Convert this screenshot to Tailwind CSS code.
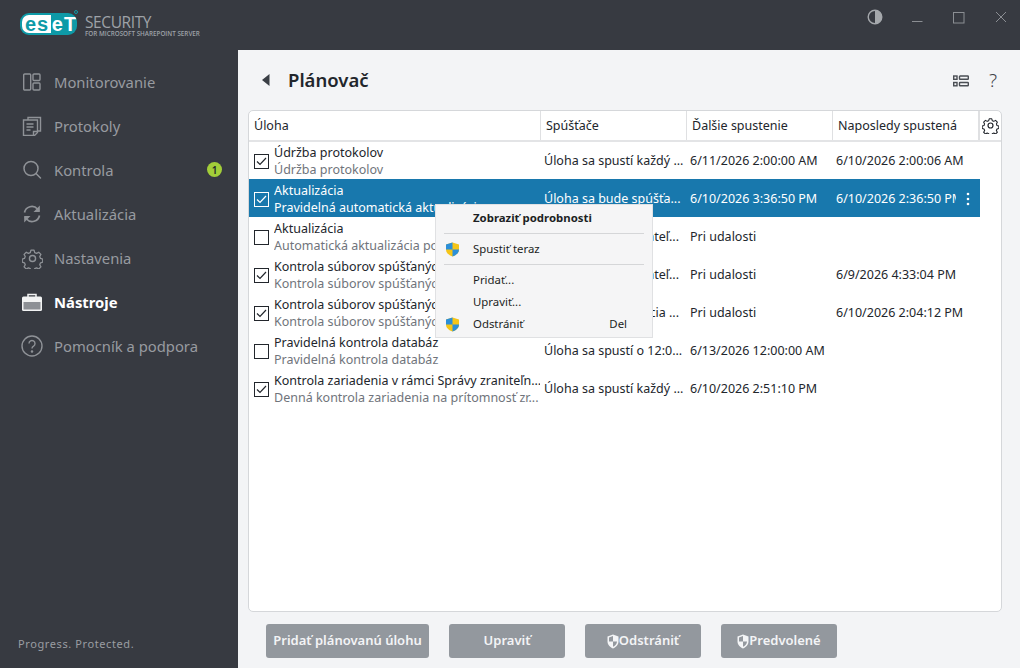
<!doctype html>
<html><head><meta charset="utf-8"><script src="https://cdn.jsdelivr.net/npm/@tailwindcss/browser@4"></script></head>
<body class="m-0">
<div class="relative w-[1020px] h-[668px] overflow-hidden flex flex-col bg-[#f3f4f6] font-['Noto_Sans',sans-serif] text-[12.5px] text-[#22262c]">
  <!-- top bar -->
  <header class="h-[50px] shrink-0 bg-[#373a41] flex items-center relative">
    <div class="ml-[20px] mt-[-2px] relative w-[58px] h-[24px]">
      <div class="absolute left-0 top-[1px] w-[57px] h-[22px] rounded-[9px] bg-[#0e9aa7] overflow-hidden">
        <div class="absolute left-[2px] top-[2px] w-[29px] h-[18px] bg-white rounded-l-[7px]"></div>
        <div class="absolute left-[5px] top-[-2px] flex font-['Liberation_Sans',sans-serif] font-bold text-[20px] leading-[26px]"><span class="text-[#0e9aa7] tracking-[0.8px]">es</span><span class="text-white ml-[3px] tracking-[1px]">eT</span></div>
      </div>
      <span class="absolute left-[54px] top-[-2px] w-[4px] h-[4px] rounded-full border border-[#0e9aa7]"></span>
    </div>
    <div class="ml-[7px] mt-[3px] text-[#9ea2a8] leading-none">
      <div class="text-[15.5px] tracking-[-0.4px] leading-[13px] font-['Open_Sans',sans-serif]">SECURITY</div>
      <div class="text-[6.3px] mt-[2px] font-semibold tracking-[0px] whitespace-nowrap font-['Open_Sans',sans-serif]">FOR MICROSOFT SHAREPOINT SERVER</div>
    </div>
    <svg class="absolute left-[867px] top-[9px]" width="16" height="16" viewBox="0 0 16 16"><circle cx="8" cy="8" r="6.800" fill="none" stroke="#a5a8ac" stroke-width="1.400"/><path d="M8 1.200a6.800 6.800 0 0 1 0 13.600z" fill="#a5a8ac"/></svg>
    <svg class="absolute left-[912px] top-[11px]" width="12" height="12" viewBox="0 0 12 12"><path d="M0 10.500h10.500" stroke="#8b8e93"/></svg>
    <svg class="absolute left-[953px] top-[12px]" width="12" height="12" viewBox="0 0 12 12"><rect x=".5" y=".5" width="10.500" height="10.500" fill="none" stroke="#8b8e93"/></svg>
    <svg class="absolute left-[995px] top-[11px]" width="12" height="12" viewBox="0 0 12 12"><path d="M1 1l10 10M11 1L1 11" stroke="#8b8e93"/></svg>
  </header>
  <div class="flex flex-1 min-h-0">
    <!-- sidebar -->
    <aside class="w-[238px] shrink-0 bg-[#373a41] flex flex-col text-[14.8px] text-[#989ba0] relative">
      <nav class="flex flex-col">
        <a class="h-[44px] flex items-center mt-[10px] pl-[22px]">
          <svg width="20" height="20" viewBox="0 0 20 20" fill="none" stroke="#8f9297" stroke-width="1.400"><rect x="1.700" y="2" width="7" height="16" rx="1"/><rect x="11" y="2" width="7" height="6.500" rx="1"/><rect x="11" y="11" width="7" height="7" rx="1"/></svg>
          <span class="ml-[12px]">Monitorovanie</span>
        </a>
        <a class="h-[44px] flex items-center pl-[22px]">
          <svg width="20" height="20" viewBox="0 0 20 20" fill="none" stroke="#8f9297" stroke-width="1.400"><path d="M6 4V1.500h12.500v13.500H15.500"/><path d="M1.500 4h14v12.500l-3 3h-11z"/><path d="M4.500 8h7M4.500 11h7M4.500 14h4"/><path d="M11.500 19v-3.500h3.500"/></svg>
          <span class="ml-[12px]">Protokoly</span>
        </a>
        <a class="h-[44px] flex items-center pl-[22px] relative">
          <svg width="20" height="20" viewBox="0 0 20 20" fill="none" stroke="#8f9297" stroke-width="1.500"><circle cx="9" cy="8.500" r="7"/><path d="M14 13.500l4.500 4.500" stroke-linecap="round"/></svg>
          <span class="ml-[12px]">Kontrola</span>
          <span class="absolute left-[207px] top-[14px] w-[15px] h-[15px] rounded-full bg-[#a3ce39] text-[#22262c] text-[10px] font-semibold flex items-center justify-center leading-none">1</span>
        </a>
        <a class="h-[44px] flex items-center pl-[22px]">
          <svg width="20" height="20" viewBox="0 0 20 20" fill="none" stroke="#8f9297" stroke-width="1.700"><path d="M2.500 8.500A7.500 7.500 0 0 1 15.500 5l1.500 2"/><path d="M17.800 1.500v6.500H11.500" stroke="none" fill="#8f9297"/><path d="M17.500 11.500A7.500 7.500 0 0 1 4.500 15L3 13"/><path d="M2.200 18.500V12h6.300" stroke="none" fill="#8f9297"/></svg>
          <span class="ml-[12px]">Aktualizácia</span>
        </a>
        <a class="h-[44px] flex items-center pl-[22px]">
          <svg width="21" height="21" viewBox="0 0 24 24" fill="none" stroke="#8f9297" stroke-width="1.600" stroke-linejoin="round"><circle cx="12" cy="12" r="3.500"/><path d="M10 1.500h4l.8 3 2.400 1 2.700-1.500 2.800 2.800-1.500 2.700 1 2.400 2.800.8v4l-2.800.8-1 2.400 1.500 2.700-2.800 2.800-2.700-1.500-2.400 1-.8 2.800h-4l-.8-2.800-2.400-1-2.700 1.500-2.800-2.800 1.500-2.700-1-2.400-2.800-.8v-4l2.800-.8 1-2.400-1.500-2.700 2.800-2.800 2.700 1.500 2.400-1z" transform="translate(1.200 1.200) scale(.9)"/></svg>
          <span class="ml-[11px]">Nastavenia</span>
        </a>
        <a class="h-[44px] flex items-center pl-[22px] text-white font-bold">
          <svg width="20" height="20" viewBox="0 0 20 20"><path d="M6 5V2.500h8V5" fill="none" stroke="#f2f3f3" stroke-width="1.500"/><rect x="0" y="4.500" width="20" height="14.500" rx="1.500" fill="#f2f3f3"/><rect x="1.500" y="10" width="17" height="7.500" fill="#8d9095"/><rect x="1.500" y="9" width="17" height="1" fill="#f2f3f3"/></svg>
          <span class="ml-[12px]">Nástroje</span>
        </a>
        <a class="h-[44px] flex items-center pl-[21px]">
          <svg width="22" height="22" viewBox="0 0 22 22" fill="none" stroke="#8f9297" stroke-width="1.400"><circle cx="11" cy="11" r="10"/><path d="M8 8.500a3 3 0 1 1 4.600 2.600c-1 .6-1.600 1.200-1.600 2.400"/><circle cx="11" cy="16.500" r=".6" fill="#8f9297"/></svg>
          <span class="ml-[11px]">Pomocník a podpora</span>
        </a>
      </nav>
      <div class="mt-auto mb-[16px] ml-[18px] text-[11px] tracking-[0.6px] text-[#9a9da2]">Progress. Protected.</div>
    </aside>
    <!-- main -->
    <main class="flex-1 min-w-0 flex flex-col pl-[10px] pr-[18px]">
      <div class="h-[60px] shrink-0 flex items-center relative">
        <svg class="ml-[13px]" width="10" height="14" viewBox="0 0 10 14"><path d="M8.500 1v12L1 7z" fill="#3a3e45"/></svg>
        <h1 class="ml-[17px] text-[18.500px] font-semibold text-[#22262c] leading-none">Plánovač</h1>
        <svg class="absolute left-[705px] top-[25px]" width="16" height="12" viewBox="0 0 16 12" fill="none" stroke="#4a4e54" stroke-width="1.400"><rect x=".7" y="1" width="3.300" height="3.300"/><rect x=".7" y="7.500" width="3.300" height="3.300"/><rect x="6.500" y="1" width="8.800" height="3.300" rx=".6"/><rect x="6.500" y="7.500" width="8.800" height="3.300" rx=".6"/></svg>
        <span class="absolute left-[741px] top-[18px] text-[#3f4349] text-[19px] leading-[24px] font-light">?</span>
      </div>
      <section class="h-[502px] bg-white border border-[#d5d7da] rounded-[5px] flex flex-col overflow-hidden relative">
        <div class="h-[31px] shrink-0 grid grid-cols-[291px_146px_146px_146px_1fr] items-stretch border-b-2 border-[#e3e4e6] text-[#22262c]">
          <div class="pl-[5px] pt-[2px] flex items-center">Úloha</div>
          <div class="pl-[5px] pt-[2px] flex items-center border-l border-[#dfe0e2]">Spúšťače</div>
          <div class="pl-[5px] pt-[2px] flex items-center border-l border-[#dfe0e2]">Ďalšie spustenie</div>
          <div class="pl-[5px] pt-[2px] flex items-center border-l border-[#dfe0e2]">Naposledy spustená</div>
          <div class="border-l border-[#dfe0e2] flex items-center justify-end pr-[1px]"><div class="border-l border-[#dfe0e2] h-full pl-[2px] flex items-center pr-[1px]">
            <svg width="17" height="17" viewBox="0 0 24 24" fill="none" stroke="#22262c" stroke-width="1.700" stroke-linejoin="round"><circle cx="12" cy="12" r="3.500"/><path d="M10 1.500h4l.8 3 2.400 1 2.700-1.500 2.800 2.800-1.500 2.700 1 2.400 2.800.8v4l-2.800.8-1 2.400 1.500 2.700-2.800 2.800-2.700-1.500-2.400 1-.8 2.800h-4l-.8-2.800-2.400-1-2.700 1.500-2.800-2.800 1.500-2.700-1-2.400-2.800-.8v-4l2.800-.8 1-2.400-1.500-2.700 2.800-2.800 2.700 1.500 2.400-1z" transform="translate(1.200 1.200) scale(.9)"/></svg>
          </div></div>
        </div>
        <div class="flex flex-col w-[731px] mt-[-1px]">
          <div class="h-[38px] pt-[2px] grid grid-cols-[291px_146px_146px_148px] items-center">
            <div class="flex items-center pl-[5px]"><span class="w-[15px] h-[15px] border border-[#22262c] flex items-center justify-center"><svg width="11" height="9" viewBox="0 0 11 9" fill="none" stroke="#22262c" stroke-width="1.200"><path d="M1 4.500l3 3 6-6.500"/></svg></span><div class="ml-[5px] leading-[18px] whitespace-nowrap overflow-hidden w-[266px]"><div class="mt-[1px] mb-[-1px]">Údržba protokolov</div><div class="text-[#70747b]">Údržba protokolov</div></div></div>
            <div class="pl-[4px] whitespace-nowrap">Úloha sa spustí každý ...</div><div class="pl-[4px] whitespace-nowrap">6/11/2026 2:00:00 AM</div><div class="pl-[4px] whitespace-nowrap">6/10/2026 2:00:06 AM</div>
          </div>
          <div class="h-[38px] pt-[2px] grid grid-cols-[291px_146px_146px_148px] items-center bg-[#1878ad] text-white">
            <div class="flex items-center pl-[5px]"><span class="w-[15px] h-[15px] border border-white flex items-center justify-center"><svg width="11" height="9" viewBox="0 0 11 9" fill="none" stroke="#fff" stroke-width="1.200"><path d="M1 4.500l3 3 6-6.500"/></svg></span><div class="ml-[5px] leading-[18px] whitespace-nowrap overflow-hidden w-[266px]"><div class="mt-[1px] mb-[-1px]">Aktualizácia</div><div>Pravidelná automatická aktualizácia</div></div></div>
            <div class="pl-[4px] whitespace-nowrap">Úloha sa bude spúšťa...</div><div class="pl-[4px] whitespace-nowrap">6/10/2026 3:36:50 PM</div><div class="pl-[4px] whitespace-nowrap flex items-center justify-between pr-[10px]"><span class="w-[120px] overflow-hidden">6/10/2026 2:36:50 PM</span><svg width="4" height="14" viewBox="0 0 4 14" fill="#fff"><circle cx="2" cy="2" r="1.300"/><circle cx="2" cy="7" r="1.300"/><circle cx="2" cy="12" r="1.300"/></svg></div>
          </div>
          <div class="h-[38px] pt-[2px] grid grid-cols-[291px_146px_146px_148px] items-center">
            <div class="flex items-center pl-[5px]"><span class="w-[15px] h-[15px] border border-[#22262c]"></span><div class="ml-[5px] leading-[18px] whitespace-nowrap overflow-hidden w-[161px]"><div class="mt-[1px] mb-[-1px]">Aktualizácia</div><div class="text-[#70747b]">Automatická aktualizácia po</div></div></div>
            <div class="pr-[7px] text-right whitespace-nowrap">Prihlásenie používateľ...</div><div class="pl-[4px] whitespace-nowrap">Pri udalosti</div><div></div>
          </div>
          <div class="h-[38px] pt-[2px] grid grid-cols-[291px_146px_146px_148px] items-center">
            <div class="flex items-center pl-[5px]"><span class="w-[15px] h-[15px] border border-[#22262c] flex items-center justify-center"><svg width="11" height="9" viewBox="0 0 11 9" fill="none" stroke="#22262c" stroke-width="1.200"><path d="M1 4.500l3 3 6-6.500"/></svg></span><div class="ml-[5px] leading-[18px] whitespace-nowrap overflow-hidden w-[161px]"><div class="mt-[1px] mb-[-1px]">Kontrola súborov spúšťaných</div><div class="text-[#70747b]">Kontrola súborov spúšťaných</div></div></div>
            <div class="pr-[7px] text-right whitespace-nowrap">Prihlásenie používateľ...</div><div class="pl-[4px] whitespace-nowrap">Pri udalosti</div><div class="pl-[4px] whitespace-nowrap">6/9/2026 4:33:04 PM</div>
          </div>
          <div class="h-[38px] pt-[2px] grid grid-cols-[291px_146px_146px_148px] items-center">
            <div class="flex items-center pl-[5px]"><span class="w-[15px] h-[15px] border border-[#22262c] flex items-center justify-center"><svg width="11" height="9" viewBox="0 0 11 9" fill="none" stroke="#22262c" stroke-width="1.200"><path d="M1 4.500l3 3 6-6.500"/></svg></span><div class="ml-[5px] leading-[18px] whitespace-nowrap overflow-hidden w-[161px]"><div class="mt-[1px] mb-[-1px]">Kontrola súborov spúšťaných</div><div class="text-[#70747b]">Kontrola súborov spúšťaných</div></div></div>
            <div class="pr-[7px] text-right whitespace-nowrap">Úspešná aktualizácia ...</div><div class="pl-[4px] whitespace-nowrap">Pri udalosti</div><div class="pl-[4px] whitespace-nowrap">6/10/2026 2:04:12 PM</div>
          </div>
          <div class="h-[38px] pt-[2px] grid grid-cols-[291px_146px_146px_148px] items-center">
            <div class="flex items-center pl-[5px]"><span class="w-[15px] h-[15px] border border-[#22262c]"></span><div class="ml-[5px] leading-[18px] whitespace-nowrap overflow-hidden w-[266px]"><div class="mt-[1px] mb-[-1px]">Pravidelná kontrola databáz</div><div class="text-[#70747b]">Pravidelná kontrola databáz</div></div></div>
            <div class="pl-[4px] whitespace-nowrap">Úloha sa spustí o 12:0...</div><div class="pl-[4px] whitespace-nowrap">6/13/2026 12:00:00 AM</div><div></div>
          </div>
          <div class="h-[38px] pt-[2px] grid grid-cols-[291px_146px_146px_148px] items-center">
            <div class="flex items-center pl-[5px]"><span class="w-[15px] h-[15px] border border-[#22262c] flex items-center justify-center"><svg width="11" height="9" viewBox="0 0 11 9" fill="none" stroke="#22262c" stroke-width="1.200"><path d="M1 4.500l3 3 6-6.500"/></svg></span><div class="ml-[5px] leading-[18px] whitespace-nowrap overflow-hidden w-[266px]"><div class="mt-[1px] mb-[-1px]">Kontrola zariadenia v rámci Správy zraniteľn...</div><div class="text-[#70747b]">Denná kontrola zariadenia na prítomnosť zr...</div></div></div>
            <div class="pl-[4px] whitespace-nowrap">Úloha sa spustí každý ...</div><div class="pl-[4px] whitespace-nowrap">6/10/2026 2:51:10 PM</div><div></div>
          </div>
        </div>
      </section>
      <div class="flex gap-[20px] mt-[12px] ml-[18px] font-semibold text-[#f3f4f6] text-[13px]">
        <button class="w-[163px] h-[34px] rounded-[3px] bg-[#93989e] flex items-center justify-center">Pridať plánovanú úlohu</button>
        <button class="w-[116px] h-[34px] rounded-[3px] bg-[#93989e] flex items-center justify-center">Upraviť</button>
        <button class="w-[116px] h-[34px] rounded-[3px] bg-[#93989e] flex items-center justify-center"><svg width="12" height="15" viewBox="0 0 12 15"><path d="M6 .5l5.500 2v5c0 3.500-2.500 5.500-5.500 7-3-1.500-5.500-3.500-5.500-7v-5z" fill="#f3f4f6"/><path d="M6 2v5.500h4c0 2.700-2 4.200-4 5.300V7.500H2V3.400z" fill="#93989e"/></svg>Odstrániť</button>
        <button class="w-[116px] h-[34px] rounded-[3px] bg-[#93989e] flex items-center justify-center"><svg width="12" height="15" viewBox="0 0 12 15"><path d="M6 .5l5.500 2v5c0 3.500-2.500 5.500-5.500 7-3-1.500-5.500-3.500-5.500-7v-5z" fill="#f3f4f6"/><path d="M6 2v5.500h4c0 2.700-2 4.200-4 5.300V7.500H2V3.400z" fill="#93989e"/></svg>Predvolené</button>
      </div>
    </main>
  </div>
  <!-- context menu -->
  <div class="absolute left-[435px] top-[204px] w-[218px] h-[134px] bg-[#f5f5f6] border border-[#e0e1e3] text-[11.400px] text-[#1c1f24]">
    <div class="h-[26px] flex items-center pl-[37px] font-bold">Zobraziť podrobnosti</div>
    <div class="mx-[8px] h-[1px] bg-[#d5d6d8] mt-[2px]"></div>
    <div class="h-[30px] flex items-center pl-[9px]">
      <svg width="15" height="15" viewBox="0 0 15 15"><path d="M7.500.5l6.500 2v5c0 3.500-3 5.800-6.500 7C4 13.300 1 11 1 7.500v-5z" fill="#f5c518"/><path d="M7.500.5l-6.500 2v5h6.500zM7.500 7.500v7c3.500-1.200 6.500-3.500 6.500-7z" fill="#2b8fd9"/></svg>
      <span class="ml-[13px]">Spustiť teraz</span>
    </div>
    <div class="mx-[8px] h-[1px] bg-[#d5d6d8]"></div>
    <div class="h-[22px] flex items-center pl-[37px] mt-[4px]">Pridať...</div>
    <div class="h-[22px] flex items-center pl-[37px]">Upraviť...</div>
    <div class="h-[22px] flex items-center pl-[9px]">
      <svg width="15" height="15" viewBox="0 0 15 15"><path d="M7.500.5l6.500 2v5c0 3.500-3 5.800-6.500 7C4 13.300 1 11 1 7.500v-5z" fill="#f5c518"/><path d="M7.500.5l-6.500 2v5h6.500zM7.500 7.500v7c3.500-1.200 6.500-3.500 6.500-7z" fill="#2b8fd9"/></svg>
      <span class="ml-[13px]">Odstrániť</span><span class="ml-auto mr-[25px]">Del</span>
    </div>
  </div>
</div>
</body></html>
